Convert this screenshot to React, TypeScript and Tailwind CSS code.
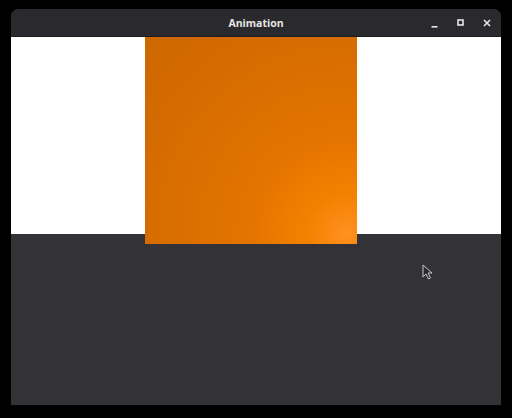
const App = () => {
  return (
    <div className="w-[512px] h-[418px] bg-black pt-[9px] pl-[11px] font-['Open_Sans','Liberation_Sans',sans-serif]">
      <div className="w-[490px] h-[396px] flex flex-col rounded-t-[8px] overflow-hidden bg-[#333236]">
        {/* title bar */}
        <div className="h-[28px] shrink-0 bg-[#2a292d] border-b border-[#1c1b1e] relative flex items-center justify-center">
          <span className="text-[10.5px] font-bold text-[#e6e6e6] mt-[2px]">Animation</span>
          <div className="absolute right-[10px] top-0 h-full flex items-center gap-[19px]">
            <svg width="7" height="7" viewBox="0 0 7 7" className="mt-[3px]">
              <rect x="0.5" y="5" width="6" height="1.6" fill="#e6e6e6" />
            </svg>
            <svg width="7" height="7" viewBox="0 0 7 7">
              <rect x="1" y="1" width="5" height="5" fill="none" stroke="#e6e6e6" strokeWidth="1.6" />
            </svg>
            <svg width="8" height="8" viewBox="0 0 8 8">
              <path d="M1 1 L7 7 M7 1 L1 7" stroke="#e6e6e6" strokeWidth="1.6" />
            </svg>
          </div>
        </div>
        {/* scene */}
        <div className="relative flex-1 flex flex-col">
          <div className="h-[197px] bg-white" />
          <div className="flex-1 bg-[#333236]" />
          <div className="absolute left-[134px] top-0 w-[212px] h-[207px] bg-[radial-gradient(circle_at_95%_95%,#ff911f_0%,#f38100_14%,#e47400_34%,#da6e00_60%,#cd6700_100%)]" />
          <svg className="absolute left-[411px] top-[227px]" width="12" height="16" viewBox="0 0 12 16">
            <path d="M1 1 L1 13 L4 10 L6.5 15 L8.5 14 L6 9 L10 9 Z" fill="#2a2a2a" stroke="#c8c8c8" strokeWidth="1" strokeLinejoin="round" />
          </svg>
        </div>
      </div>
    </div>
  )
}

export default App
